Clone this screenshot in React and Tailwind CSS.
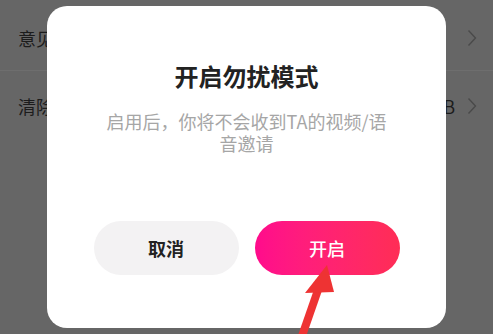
export default function App() {
  const font = { fontFamily: '"Noto Sans CJK SC", "Noto Sans", sans-serif' };
  return (
    <div className="relative w-[493px] h-[334px] overflow-hidden bg-[#666666]" style={font}>
      {/* settings list behind the dimmed overlay */}
      <div className="flex flex-col">
        <div className="h-[70px] flex items-center justify-between pl-[18px] pr-[16px] pt-[6px]">
          <span className="text-[18px] text-[#1c1c1c]">意见反馈</span>
          <svg width="10" height="18" viewBox="0 0 10 18" fill="none">
            <path d="M1.5 1.5 L8.5 9 L1.5 16.5" stroke="#4a4a4a" strokeWidth="1.4" />
          </svg>
        </div>
        <div className="h-px bg-[#6e6e6e]" />
        <div className="h-[70px] flex items-center justify-between pl-[18px] pr-[16px]">
          <span className="text-[18px] text-[#1c1c1c]">清除缓存</span>
          <div className="flex items-center gap-[12px]">
            <span className="text-[18px] text-[#1c1c1c]">12.3MB</span>
            <svg width="10" height="18" viewBox="0 0 10 18" fill="none">
              <path d="M1.5 1.5 L8.5 9 L1.5 16.5" stroke="#4a4a4a" strokeWidth="1.4" />
            </svg>
          </div>
        </div>
      </div>

      {/* dialog */}
      <div className="absolute left-[47px] top-[6px] w-[399px] h-[322px] bg-white rounded-[20px] flex flex-col items-center">
        <div className="mt-[54px] text-[24px] leading-[32px] font-bold text-[#222222]">开启勿扰模式</div>
        <div className="mt-[18px] text-center text-[18px] leading-[22px] text-[#a6a6a6] whitespace-nowrap">
          启用后，你将不会收到TA的视频/语<br />音邀请
        </div>
        <div className="mt-auto mb-[53px] flex gap-[16px]">
          <button className="w-[145px] h-[54px] rounded-full bg-[#f3f2f3] text-[18px] font-bold text-[#222222]">
            取消
          </button>
          <button className="w-[145px] h-[54px] rounded-full bg-gradient-to-r from-[#ff0a8c] to-[#ff2d55] text-[18px] font-medium text-white">
            开启
          </button>
        </div>
      </div>

      {/* red arrow annotation */}
      <svg className="absolute left-0 top-0" width="493" height="334" viewBox="0 0 493 334">
        <path d="M302 336 L318 290" stroke="#ee3333" strokeWidth="8" />
        <polygon points="327,265 334,292 305,293" fill="#ee3333" />
      </svg>
    </div>
  );
}
